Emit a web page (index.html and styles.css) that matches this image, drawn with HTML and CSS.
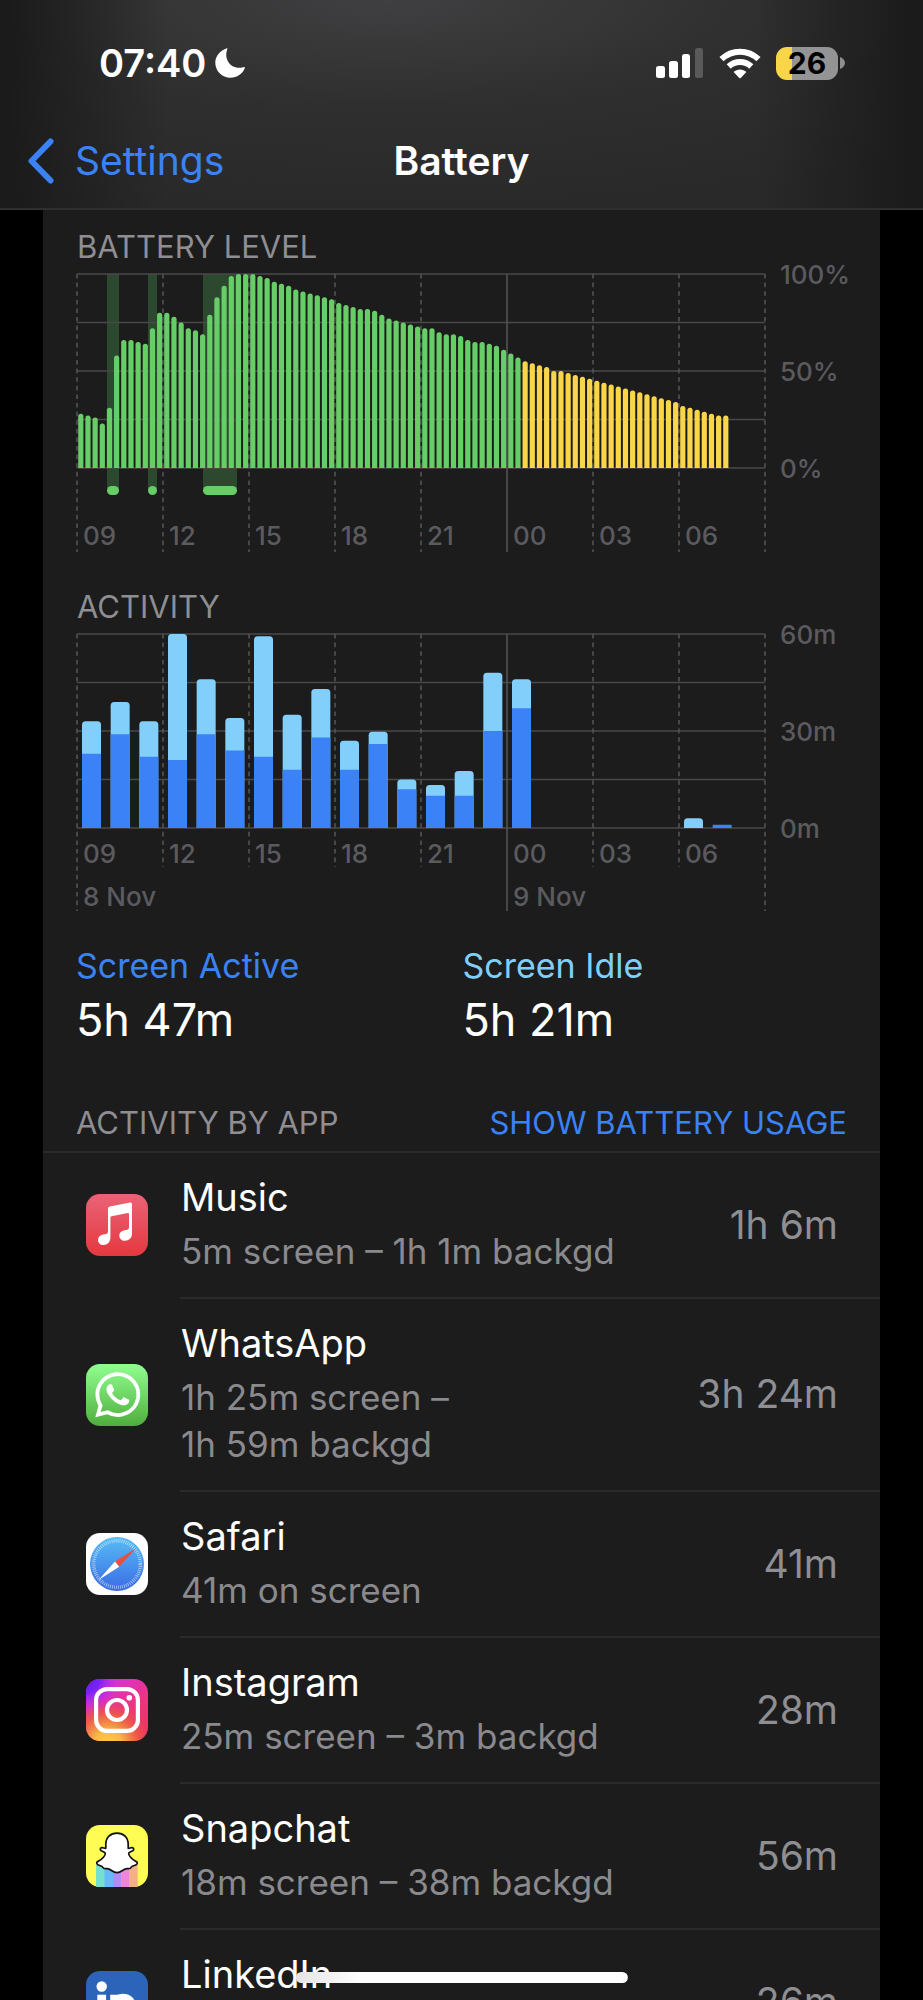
FILE: index.html
```html
<!DOCTYPE html>
<html lang="en">
<head>
<meta charset="utf-8">
<meta name="viewport" content="width=device-width, initial-scale=1">
<title>Battery</title>
<link rel="stylesheet" href="styles.css">
</head>
<body>
<div class="screen">
  <header class="top">
    <div class="status">
      <div class="status-group">
        <time class="clock">07:40</time>
        <svg class="moon" viewBox="0 0 30 30" aria-label="Focus on"><path fill="#fff" d="M11.3.6C12.4 0 12.6.6 12.1 1.700C10.900 5 10.800 9 12.500 12.500C15.500 18.500 21.500 21 28.200 19.300C29.700 18.800 30.200 19.300 29.600 20.600C27.500 26 22 29.700 15.500 29.700C7 29.700 .3 23 .3 14.700C.3 8.500 5 2.800 11.300 .6Z"/></svg>
      </div>
      <div class="status-group status-icons">
        <svg class="signal" viewBox="0 0 48 32" aria-label="Signal"><g fill="#fff"><rect x="0" y="19" width="9" height="12" rx="2.500"/><rect x="13" y="14" width="9" height="17" rx="2.500"/><rect x="26" y="7" width="8" height="24" rx="2.500"/></g><rect x="39" y="1" width="8" height="30" rx="2.500" fill="#5a5a5b"/></svg>
        <svg class="wifi" viewBox="0 0 42 31" aria-label="Wi-Fi"><g fill="none" stroke="#fff" stroke-width="6"><path d="M2.500 11.200A26.500 26.500 0 0 1 39.500 11.200"/><path d="M9.700 18.500A16.500 16.500 0 0 1 32.300 18.500"/></g><path fill="#fff" d="M21 21.500C23.500 21.500 25.700 22.400 27.400 24.100L21.700 29.900Q21 30.600 20.300 29.900L14.600 24.100C16.300 22.400 18.500 21.500 21 21.500Z"/></svg>
        <div class="battery"><span class="battery-level">26</span><svg class="battery-nub" viewBox="0 0 5 12"><path fill="#8e8e8f" d="M0 0C3 1 5 3.500 5 6S3 11 0 12Z"/></svg></div>
      </div>
    </div>
    <nav class="nav">
      <a class="back" href="#settings">
        <svg class="chevron" viewBox="0 0 26 46" aria-hidden="true"><path d="M22.500 3.500L3.500 23L22.500 42.500" fill="none" stroke="#3b82f7" stroke-width="6" stroke-linecap="round" stroke-linejoin="round"/></svg>
        <span>Settings</span>
      </a>
      <h1 class="title">Battery</h1>
    </nav>
  </header>

  <main class="card">
    <section class="chart">
      <h2 class="label">BATTERY LEVEL</h2>
      <svg id="battery-chart" class="plot" viewBox="0 0 780 289" role="img" aria-label="Battery level"></svg>
    </section>
    <section class="chart">
      <h2 class="label">ACTIVITY</h2>
      <svg id="activity-chart" class="plot" viewBox="0 0 780 289" role="img" aria-label="Activity"></svg>
    </section>

    <dl class="stats">
      <div><dt class="stat-name active">Screen Active</dt><dd class="stat-value">5h 47m</dd></div>
      <div><dt class="stat-name idle">Screen Idle</dt><dd class="stat-value">5h 21m</dd></div>
    </dl>

    <div class="list-head">
      <h2 class="label">ACTIVITY BY APP</h2>
      <button class="toggle" type="button">SHOW BATTERY USAGE</button>
    </div>

    <ul class="apps">
      <li class="app">
        <svg class="icon" viewBox="0 0 62 62"><defs><linearGradient id="mu" x2="0" y2="1"><stop stop-color="#ea6377"/><stop offset="1" stop-color="#e5383f"/></linearGradient></defs><rect width="62" height="62" fill="url(#mu)"/><path fill="#fff" d="M22 14.500Q22 12.800 23.700 12.500L44.200 8.500Q46 8.200 46 10V39.500C46 44 43 46.700 38.800 46.700C35.700 46.700 33.300 44.600 33.300 41.700C33.300 38.600 35.500 36.900 38.500 36.300L41.300 35.700Q43 35.300 43 33.500V20.200Q43 18.800 41.700 19L25.600 22.200Q24.400 22.500 24.400 23.800V43.500C24.400 48 21.500 51 17.300 51C14.200 51 12 48.900 12 46C12 43 14.200 41.200 17.200 40.600L20.200 40Q22 39.600 22 37.800Z"/></svg>
        <div class="row">
          <div class="info"><h3 class="name">Music</h3><p class="detail">5m screen – 1h 1m backgd</p></div>
          <span class="time">1h 6m</span>
        </div>
      </li>
      <li class="app">
        <svg class="icon" viewBox="0 0 62 62"><defs><linearGradient id="wa" x2="0" y2="1"><stop stop-color="#90ff90"/><stop offset="1" stop-color="#4fae3d"/></linearGradient></defs><rect width="62" height="62" fill="url(#wa)"/><path fill="#fff" transform="translate(9.200 8.200) scale(1.880)" d="M17.472 14.382c-.297-.149-1.758-.867-2.030-.967-.273-.099-.471-.148-.670.150-.197.297-.767.966-.940 1.164-.173.199-.347.223-.644.075-.297-.150-1.255-.463-2.390-1.475-.883-.788-1.480-1.761-1.653-2.059-.173-.297-.018-.458.130-.606.134-.133.298-.347.446-.520.149-.174.198-.298.298-.497.099-.198.050-.371-.025-.520-.075-.149-.669-1.612-.916-2.207-.242-.579-.487-.500-.669-.510-.173-.008-.371-.010-.570-.010-.198 0-.520.074-.792.372-.272.297-1.040 1.016-1.040 2.479 0 1.462 1.065 2.875 1.213 3.074.149.198 2.096 3.200 5.077 4.487.709.306 1.262.489 1.694.625.712.227 1.360.195 1.871.118.571-.085 1.758-.719 2.006-1.413.248-.694.248-1.289.173-1.413-.074-.124-.272-.198-.570-.347m-5.421 7.403h-.004a9.870 9.870 0 01-5.031-1.378l-.361-.214-3.741.982.998-3.648-.235-.374a9.860 9.860 0 01-1.510-5.260c.001-5.450 4.436-9.884 9.888-9.884 2.640 0 5.122 1.030 6.988 2.898a9.825 9.825 0 012.893 6.994c-.003 5.450-4.437 9.884-9.885 9.884m8.413-18.297A11.815 11.815 0 0012.050 0C5.495 0 .160 5.335.157 11.892c0 2.096.547 4.142 1.588 5.945L.057 24l6.305-1.654a11.882 11.882 0 005.683 1.448h.005c6.554 0 11.890-5.335 11.893-11.893a11.821 11.821 0 00-3.480-8.413z"/></svg>
        <div class="row">
          <div class="info"><h3 class="name">WhatsApp</h3><p class="detail">1h 25m screen –<br>1h 59m backgd</p></div>
          <span class="time">3h 24m</span>
        </div>
      </li>
      <li class="app">
        <svg class="icon" viewBox="0 0 62 62"><defs><linearGradient id="sf" x2="0" y2="1"><stop stop-color="#57bdf4"/><stop offset="1" stop-color="#3a6be6"/></linearGradient></defs><rect width="62" height="62" fill="#fff"/><circle cx="31" cy="31" r="27" fill="url(#sf)"/><circle cx="31" cy="31" r="23.300" fill="none" stroke="#fff" stroke-opacity=".6" stroke-width="3.500" stroke-dasharray=".8 1.233"/><path fill="#eb4e3d" d="M50 15.300L33.200 33.800L29 28.600Z"/><path fill="#fff" d="M12.500 47L33.200 33.800L29 28.600Z"/></svg>
        <div class="row">
          <div class="info"><h3 class="name">Safari</h3><p class="detail">41m on screen</p></div>
          <span class="time">41m</span>
        </div>
      </li>
      <li class="app">
        <svg class="icon" viewBox="0 0 62 62"><defs><linearGradient id="ig1" x1=".2" y1=".1" x2=".8" y2="1"><stop stop-color="#d82fe0"/><stop offset=".5" stop-color="#ea3586"/><stop offset="1" stop-color="#ec3560"/></linearGradient><radialGradient id="ig2" cx=".35" cy="1.050" r=".75"><stop stop-color="#fbd044"/><stop offset=".3" stop-color="#f6b845"/><stop offset=".65" stop-color="#ee6040" stop-opacity=".85"/><stop offset="1" stop-color="#ec3a5a" stop-opacity="0"/></radialGradient><radialGradient id="ig3" cx="0" cy="0" r=".55"><stop stop-color="#5a1cf5"/><stop offset=".4" stop-color="#7a22f5"/><stop offset="1" stop-color="#d030f0" stop-opacity="0"/></radialGradient></defs><rect width="62" height="62" fill="url(#ig1)"/><rect width="62" height="62" fill="url(#ig2)"/><rect width="62" height="62" fill="url(#ig3)"/><g fill="none" stroke="#fff" stroke-width="4.200"><rect x="10.100" y="10.100" width="41.800" height="41.800" rx="11"/><circle cx="31" cy="31" r="10"/></g><circle cx="43.300" cy="18.800" r="2.800" fill="#fff"/></svg>
        <div class="row">
          <div class="info"><h3 class="name">Instagram</h3><p class="detail">25m screen – 3m backgd</p></div>
          <span class="time">28m</span>
        </div>
      </li>
      <li class="app">
        <svg class="icon" viewBox="0 0 62 62"><rect width="62" height="62" fill="#fffc54"/><path fill="#74e0cd" d="M10 40h9v22h-9z"/><path fill="#67b9f9" d="M18.500 40h9v22h-9z"/><path fill="#ad8df5" d="M27 40h8.500v22H27z"/><path fill="#ee85d8" d="M35.200 40h8.500v22h-8.500z"/><path fill="#f5b083" d="M43.500 40h8.200v22h-8.200z"/><path fill="#fff" stroke="#111" stroke-width="1.700" stroke-linejoin="round" d="M31 8.200C37.500 8.200 42.200 12.500 42.200 19.500V23.300C43.700 23.500 44.700 22.300 46.200 22.600C48 23 48.200 24.800 46.800 25.700C45.300 26.600 43.200 26.700 42.700 28.200C42.300 30 45.500 34.500 50.300 36.600C52 37.400 51.300 39.300 49.700 40C48 40.700 45.800 40.700 45 42.500C44.400 44.200 43 43.600 40.800 43.600C37.200 43.600 35.500 47.700 31 47.700S24.800 43.600 21.200 43.600C19 43.600 17.600 44.200 17 42.500C16.200 40.700 14 40.700 12.300 40C10.700 39.300 10 37.400 11.700 36.600C16.500 34.500 19.700 30 19.300 28.200C18.800 26.700 16.700 26.600 15.200 25.700C13.800 24.800 14 23 15.800 22.600C17.300 22.300 18.300 23.500 19.800 23.300V19.500C19.800 12.500 24.500 8.200 31 8.200Z"/></svg>
        <div class="row">
          <div class="info"><h3 class="name">Snapchat</h3><p class="detail">18m screen – 38m backgd</p></div>
          <span class="time">56m</span>
        </div>
      </li>
      <li class="app">
        <svg class="icon" viewBox="0 0 62 62"><rect width="62" height="62" fill="#2b64b8"/><circle cx="15.700" cy="15.500" r="5.200" fill="#fff"/><rect x="11.300" y="23.700" width="8.800" height="28" fill="#fff"/><path d="M28.500 51.700V23.700M28.500 37C28.500 29.500 31.500 27 37 27S46 30.500 46 37V51.700" fill="none" stroke="#fff" stroke-width="8.600"/></svg>
        <div class="row">
          <div class="info"><h3 class="name">LinkedIn</h3><p class="detail">&nbsp;</p></div>
          <span class="time">26m</span>
        </div>
      </li>
    </ul>
  </main>
  <div class="home-indicator"></div>
</div>
<script src="charts.js"></script>
</body>
</html>
```

FILE: styles.css
```css
* {
  box-sizing: border-box;
}

body {
  margin: 0;
  background: #000;
  color: #fff;
  font-family: Inter, "Liberation Sans", sans-serif;
}

h1, h2, h3, p, dl, dd, ul {
  margin: 0;
  padding: 0;
  font-weight: 400;
}

svg {
  display: block;
  flex: none;
}

.screen {
  position: relative;
  height: 100vh;
  overflow: hidden;
}

.top {
  padding-bottom: 13px;
  border-bottom: 2px solid #2f2f30;
  background:
    linear-gradient(90deg, #1a1a1a 0%, rgba(26, 26, 26, 0) 18%, rgba(26, 26, 26, 0) 82%, #1a1a1a 100%),
    radial-gradient(ellipse 85% 105% at 42% 0, rgba(66, 66, 68, 0.9), rgba(50, 50, 51, 0.6) 50%, rgba(40, 40, 40, 0)),
    #292929;
}

.status {
  display: flex;
  justify-content: space-between;
  align-items: center;
  height: 126px;
  padding: 0 78px 0 99px;
}

.status-group {
  display: flex;
  align-items: center;
  gap: 9px;
}

.status-icons {
  gap: 15px;
}

.clock {
  font-size: 38px;
  font-weight: 600;
}

.moon {
  width: 30px;
  height: 30px;
}

.signal {
  width: 48px;
  height: 32px;
}

.wifi {
  width: 42px;
  height: 31px;
}

.battery {
  display: flex;
  align-items: center;
  gap: 2px;
}

.battery-level {
  width: 62px;
  border-radius: 11px;
  background: linear-gradient(90deg, #f8d648 26%, #949495 26%);
  color: #000;
  font-size: 30px;
  font-weight: 700;
  line-height: 33px;
  text-align: center;
}

.battery-nub {
  width: 5px;
  height: 12px;
}

.nav {
  display: grid;
  grid-template-columns: 1fr auto 1fr;
  align-items: center;
  height: 69px;
  padding: 0 28px;
}

.back {
  display: flex;
  align-items: center;
  gap: 21px;
  color: #3b82f7;
  font-size: 39px;
  text-decoration: none;
}

.chevron {
  width: 26px;
  height: 46px;
}

.title {
  font-size: 39px;
  font-weight: 600;
}

.card {
  margin: 0 43px;
  padding-top: 19px;
  background: #1c1c1c;
}

.chart {
  padding: 0 23px 0 34px;
}

.chart + .chart {
  margin-top: 35px;
}

.label {
  color: #8e8e93;
  font-size: 31px;
  line-height: 36px;
}

.plot {
  width: 100%;
  overflow: visible;
}

.grid-line {
  stroke: #48484b;
  stroke-width: 1.5;
}

.tick {
  stroke: #56565a;
  stroke-width: 1.5;
}

.tick.dashed {
  stroke-dasharray: 4.6 4;
}

.axis-text {
  fill: #5a5a5f;
  font-size: 26px;
  font-weight: 500;
}

.fill-green {
  fill: #67ce67;
}

.fill-yellow {
  fill: #f8d648;
}

.fill-charge {
  fill: #2c482e;
}

.fill-active {
  fill: #3b82f7;
}

.fill-idle {
  fill: #83cffb;
}

.stats {
  display: grid;
  grid-template-columns: 1fr 1fr;
  margin-top: 28px;
  padding: 0 31px 0 33px;
}

.stat-name {
  font-size: 34px;
  line-height: 48px;
}

.active {
  color: #3b82f7;
}

.idle {
  color: #80cffa;
}

.stat-value {
  margin-top: 2px;
  font-size: 45px;
  line-height: 56px;
}

.list-head {
  display: flex;
  justify-content: space-between;
  margin-top: 57px;
  padding: 0 33px 10px;
  border-bottom: 2px solid #2a2a2b;
}

.toggle {
  padding: 0;
  border: 0;
  background: none;
  color: #3b82f7;
  font: inherit;
  font-size: 31px;
  line-height: 36px;
}

.apps {
  list-style: none;
}

.app {
  display: flex;
  align-items: center;
  gap: 32px;
  padding-left: 43px;
}

.icon {
  width: 62px;
  height: 62px;
  margin-bottom: 2px;
  border-radius: 14px;
}

.row {
  display: flex;
  flex: 1;
  justify-content: space-between;
  align-items: center;
  padding: 20px 42px 22px 1px;
  border-bottom: 2px solid #2a2a2b;
}

.name {
  font-size: 38px;
  line-height: 48px;
}

.detail {
  margin-top: 7px;
  color: #8a8a8e;
  font-size: 35px;
  line-height: 47px;
}

.time {
  color: #8e8e93;
  font-size: 39px;
}

.home-indicator {
  position: absolute;
  bottom: 17px;
  left: 50%;
  width: 36%;
  height: 11px;
  border-radius: 6px;
  background: linear-gradient(90deg, #e4e4e4, #fff 20%);
  transform: translateX(-50%);
}
```

FILE: charts.js
```js
const NS = "http://www.w3.org/2000/svg";
const WIDTH = 688;
const TOP = 9;
const HEIGHT = 194;
const BASE = TOP + HEIGHT;
const HOUR = WIDTH / 24;
const HOURS = ["09", "12", "15", "18", "21", "00", "03", "06"];

function add(svg, tag, cls, attrs, text) {
  const el = document.createElementNS(NS, tag);
  el.setAttribute("class", cls);
  for (const key in attrs) el.setAttribute(key, attrs[key]);
  if (text) el.textContent = text;
  svg.appendChild(el);
}

function frame(svg, scale, hourBaseline, tickEnd, dayEnd) {
  for (let i = 0; i <= 4; i++) {
    const y = TOP + (HEIGHT * i) / 4;
    add(svg, "line", "grid-line", { x1: 0, x2: WIDTH, y1: y, y2: y });
  }
  for (let i = 0; i <= 8; i++) {
    const x = i * 3 * HOUR;
    const midnight = HOURS[i] === "00";
    const end = i === 0 || i === 8 || midnight ? dayEnd : tickEnd;
    add(svg, "line", midnight ? "tick" : "tick dashed", { x1: x, x2: x, y1: TOP, y2: end });
    if (HOURS[i]) add(svg, "text", "axis-text", { x: x + 6, y: hourBaseline }, HOURS[i]);
  }
  scale.forEach((label, i) => {
    add(svg, "text", "axis-text", { x: WIDTH + 15, y: TOP + (HEIGHT * i) / 2 + 10 }, label);
  });
}

function bar(svg, cls, x, width, value, radius) {
  const h = HEIGHT * value;
  const r = Math.min(radius, h);
  const y = BASE - h;
  add(svg, "path", cls, {
    d: `M${x} ${BASE}V${y + r}q0 ${-r} ${r} ${-r}h${width - 2 * r}q${r} 0 ${r} ${r}V${BASE}Z`
  });
}

const levels = [
  28, 27, 26, 23, 31, 58, 66, 66, 65, 64, 72, 80, 80, 78, 75, 72, 71, 69, 79, 88, 94, 99,
  100, 100, 100, 99, 98, 96, 95, 94, 92, 91, 90, 89, 88, 87, 85, 84, 83, 82, 82, 81, 79, 77,
  76, 75, 74, 73, 72, 72, 70, 69, 69, 68, 66, 65, 65, 64, 63, 61, 59, 57, 55, 54, 53, 52,
  50, 50, 49, 48, 47, 46, 45, 44, 43, 42, 41, 40, 39, 38, 37, 36, 35, 34, 32, 31, 30, 29,
  28, 27, 27
];
const charging = [[30, 12], [71, 9], [126, 34]];
const FIRST_LOW = 62;

const battery = document.getElementById("battery-chart");
charging.forEach(([x, width]) => {
  add(battery, "rect", "fill-charge", { x, y: TOP, width, height: 217 });
  add(battery, "rect", "fill-green", { x, y: 221, width, height: 9, rx: 4.5 });
});
frame(battery, ["100%", "50%", "0%"], 280, 287, 287);
levels.forEach((level, i) => {
  const x = 1.2 + (i * HOUR) / 4;
  bar(battery, i < FIRST_LOW ? "fill-green" : "fill-yellow", x, 5.2, level / 100, 2.5);
});

const activity = [
  [33, 23], [39, 29], [33, 22], [60, 21], [46, 29], [34, 24], [59.3, 22], [35, 18],
  [43, 28], [27, 18], [29.8, 26], [15, 12], [13.3, 10], [17.6, 10], [48, 30], [46, 37],
  [0, 0], [0, 0], [0, 0], [0, 0], [0, 0], [3, 0], [1, 1], [0, 0]
];

const usage = document.getElementById("activity-chart");
frame(usage, ["60m", "30m", "0m"], 238, 242, 286);
activity.forEach(([total, active], i) => {
  const x = 5 + i * HOUR;
  if (total > active) bar(usage, "fill-idle", x, 19, total / 60, 3.5);
  if (active) bar(usage, "fill-active", x, 19, active / 60, 0);
});
add(usage, "text", "axis-text", { x: 6, y: 281 }, "8 Nov");
add(usage, "text", "axis-text", { x: 15 * HOUR + 6, y: 281 }, "9 Nov");
```
